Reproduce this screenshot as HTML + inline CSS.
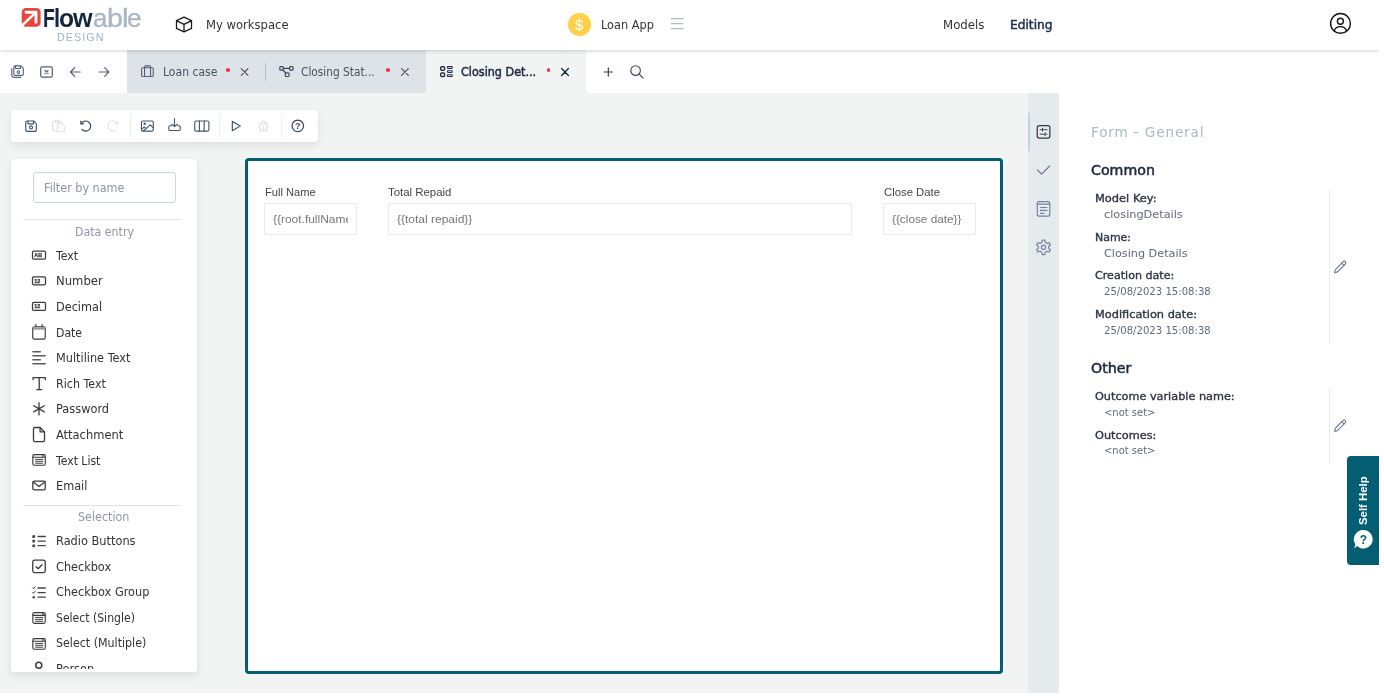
<!DOCTYPE html>
<html lang="en"><head><meta charset="utf-8"><title>Flowable Design - Closing Details</title>
<style>
*{box-sizing:border-box;margin:0;padding:0}
html,body{width:1384px;height:696px;overflow:hidden;background:#fff}
body{font-family:"Liberation Sans",sans-serif;color:#333;position:relative}
#app{position:absolute;left:0;top:0;width:1379px;height:693px;overflow:hidden;background:#f2f4f4;will-change:transform}
.d{font-family:"DejaVu Sans","Liberation Sans",sans-serif}
.t{position:absolute;white-space:nowrap;line-height:1;transform-origin:0 50%;display:block}
.abs,svg.i{position:absolute}
svg.i{overflow:visible;fill:none;stroke-linecap:round;stroke-linejoin:round}
header{position:absolute;left:0;top:0;width:1379px;height:50px;background:#fff;box-shadow:0 1px 4px rgba(0,0,0,.19);z-index:5}
nav.tabs{position:absolute;left:0;top:50px;width:1379px;height:43.2px;background:#f2f4f4}
.tabl{position:absolute;left:0;top:0;width:126.5px;height:43.2px;background:#fff}
.tabr{position:absolute;left:585.5px;top:0;width:793.5px;height:43.2px;background:#fff;border-bottom-left-radius:4px}
.tabgrp{position:absolute;left:126.5px;top:0;width:299px;height:43.2px;background:#dde3e6;border-bottom-right-radius:4px}
.tabsep{position:absolute;left:264.5px;top:13px;width:1px;height:18px;background:#b4c0c8}
.dot{position:absolute;width:3.6px;height:3.6px;border-radius:50%;background:#f5363f}
.toolbar{position:absolute;left:11px;top:109.6px;width:307px;height:32px;background:#fff;border-radius:4px;box-shadow:0 3px 8px rgba(0,0,0,.09)}
.toolbar i{position:absolute;top:4px;width:1px;height:24px;background:#eceff1}
.palette{position:absolute;left:11px;top:159px;width:186px;height:513px;background:#fff;border-radius:4px;box-shadow:0 4px 10px rgba(0,0,0,.09);overflow:hidden}
.filter{position:absolute;left:22px;top:13px;width:143px;height:31px;border:1px solid #c9d6db;border-radius:3px;background:#fff}
.hr{position:absolute;left:11.5px;width:158px;height:1px;background:#dfe4e8}
.canvas{position:absolute;left:245px;top:157.5px;width:757.5px;height:516.5px;border:3px solid #045d71;border-radius:4px;background:#fff}
.inp{position:absolute;top:202.5px;height:32px;border:1px solid #eaeaea;background:#fff;overflow:hidden}
.strip{position:absolute;left:1028px;top:93px;width:30.5px;height:600px;background:#e5eaed}
.strip b{position:absolute;left:.3px;top:20px;width:2.2px;height:38px;background:#c3d0e9}
.props{position:absolute;left:1058.5px;top:93px;width:320.5px;height:600px;background:#fff}
.vl{position:absolute;left:1329px;width:1px;background:#e8ebed}
.help{position:absolute;left:1347px;top:456px;width:32px;height:109px;background:#035e73;border-radius:4px 0 0 4px}
</style></head>
<body>
<div id="app">
<header>
<svg class="i" viewBox="0 0 170 50" style="left:0;top:0;width:170px;height:50px;"><rect x="21.7" y="7.9" width="18.9" height="18.9" rx="4.3" fill="#e8453c"/><path d="M26 12.3H36V22.3" stroke="#fff" stroke-width="2.9"/><path d="M35.6 12.7L19.5 27.8" stroke="#fff" stroke-width="2.5"/></svg>
<div class="brand"><span class="t" style="left:42.91px;top:5.8px;font-size:25px;font-weight:700;color:#14253d;transform:scaleX(0.773)">F</span><span class="t" style="left:54.07px;top:5.8px;font-size:25px;font-weight:700;color:#14253d;transform:scaleX(0.875)">l</span><span class="t" style="left:58.94px;top:5.8px;font-size:25px;font-weight:700;color:#14253d;transform:scaleX(0.984)">o</span><span class="t" style="left:73.47px;top:5.8px;font-size:25px;font-weight:700;color:#14253d;transform:scaleX(1.007)">w</span><span class="t" style="left:93.10px;top:5.8px;font-size:25px;-webkit-text-stroke:.3px;color:#a9b6c3;transform:scaleX(1.036)">a</span><span class="t" style="left:106.85px;top:5.8px;font-size:25px;-webkit-text-stroke:.3px;color:#a9b6c3;transform:scaleX(1.147)">b</span><span class="t" style="left:121.51px;top:5.8px;font-size:25px;-webkit-text-stroke:.3px;color:#a9b6c3;transform:scaleX(1.183)">l</span><span class="t" style="left:126.90px;top:5.8px;font-size:25px;-webkit-text-stroke:.3px;color:#a9b6c3;transform:scaleX(1.040)">e</span></div>
<span class="t" style="left:57.0px;top:32px;font-size:10.5px;color:#9db4bf;transform:scaleX(1.027);letter-spacing:1px;">DESIGN</span>
<svg class="i" viewBox="0 0 300 50" style="left:0;top:0;width:300px;height:50px;"><g transform="translate(184 24.5) scale(0.95) translate(-184 -24.5)"><path d="M184 16.8L191.9 20.4V28.6L184 32.3L176.1 28.6V20.4ZM176.1 20.4L184 24.3L191.9 20.4M184 24.3V32.3" stroke="#1a1a1a" stroke-width="1.35"/></g></svg>
<span class="t d" style="left:205.5px;top:20px;font-size:11.5px;transform:scaleX(1.007);">My workspace</span>
<div class="abs" style="left:568.2px;top:13.3px;width:22.6px;height:22.6px;border-radius:50%;background:#ffd04c"></div>
<span class="t" style="left:575.4px;top:17px;font-size:15px;color:#fff;transform:scaleX(0.983);">$</span>
<span class="t d" style="left:601.0px;top:20px;font-size:11.5px;transform:scaleX(0.987);">Loan App</span>
<svg class="i" viewBox="0 0 700 50" style="left:0;top:0;width:700px;height:50px;"><path d="M671.3 18.7H683M671.3 23.7H683M671.3 28.6H683" stroke="#a9bfc8" stroke-width="1.2"/></svg>
<span class="t d" style="left:942.6px;top:20px;font-size:11.5px;transform:scaleX(1.021);">Models</span>
<span class="t d" style="left:1010.4px;top:20px;font-size:11.5px;-webkit-text-stroke:.5px;color:#1e3250;transform:scaleX(1.061);">Editing</span>
<svg class="i" viewBox="0 0 1379 50" style="left:0;top:0;width:1379px;height:50px;"><circle cx="1340.5" cy="23.4" r="9.9" stroke="#111" stroke-width="1.4"/><circle cx="1340.4" cy="21.2" r="3" stroke="#111" stroke-width="1.4"/><path d="M1334.3 30.9C1335 28.2 1337.4 26.6 1340.4 26.6C1343.4 26.6 1345.8 28.2 1346.6 30.9" stroke="#111" stroke-width="1.4"/></svg>
</header>
<nav class="tabs">
<div class="tabl"></div><div class="tabgrp"></div><div class="tabr"></div><div class="tabsep"></div>
<svg class="i" viewBox="0 50 700 43" style="left:0;top:0;width:700px;height:43px;"><g stroke="#52627a" stroke-width="1.2"><g transform="translate(17.6 71.7) scale(0.92) translate(-17.6 -71.7)"><path d="M15 65.4H21.3L23.8 67.9V74.4A1.3 1.3 0 0 1 22.5 75.7H14.8A1.3 1.3 0 0 1 13.5 74.4V66.7A1.3 1.3 0 0 1 14.8 65.4Z"/><path d="M15.3 65.6V68.3H20.6V65.6"/><circle cx="18.5" cy="72.1" r="1.4"/><path d="M11.3 68.3V75.3A2.6 2.6 0 0 0 13.9 77.9H21"/></g><rect x="40.7" y="66.8" width="11.6" height="10.4" rx="1.6"/><path d="M45 70.5L48 73.5M48 70.5L45 73.5"/><path d="M70.6 72H80.2M74.7 67.7L70.5 72L74.7 76.3"/><path d="M99.1 72H108.7M104.6 67.7L108.8 72L104.6 76.3"/><g transform="translate(147.45 71.15) scale(0.92) translate(-147.45 -71.15)"><rect x="141.1" y="67.5" width="12.7" height="9.4" rx="1.4"/><path d="M144.3 76.8V66.6A1.2 1.2 0 0 1 145.5 65.4H149.6A1.2 1.2 0 0 1 150.8 66.6V76.8"/></g></g><g stroke="#3d4c63" stroke-width="1.2"><rect x="279.8" y="66.6" width="3.5" height="3.5" rx=".9"/><rect x="289.6" y="66.6" width="3.5" height="3.5" rx=".9"/><rect x="285.3" y="72.9" width="3.8" height="3.6" rx=".9"/><path d="M283.3 68.3H289.6M282.9 70L285.7 73"/></g><g stroke="#24324a" stroke-width="1.35"><rect x="440.7" y="66.7" width="3.9" height="3.5" rx=".9"/><rect x="440.7" y="73" width="3.9" height="3.5" rx=".9"/><g stroke-width="1.05"><rect x="447.3" y="66.55" width="5.1" height="1.8" rx=".9"/><rect x="447.3" y="70.65" width="5.1" height="1.8" rx=".9"/><rect x="447.3" y="74.75" width="5.1" height="1.8" rx=".9"/></g></g><path d="M241.2 68.6L248 75.4M248 68.6L241.2 75.4" stroke="#44546a" stroke-width="1.15"/><path d="M401.5 68.6L408.3 75.4M408.3 68.6L401.5 75.4" stroke="#44546a" stroke-width="1.15"/><path d="M561.6 68.6L568.4 75.4M568.4 68.6L561.6 75.4" stroke="#1e2d45" stroke-width="1.4"/><path d="M604.1 72H612.5M608.3 67.8V76.2" stroke="#333f50" stroke-width="1.15"/><circle cx="635.6" cy="70.6" r="4.8" stroke="#3d4b60" stroke-width="1.15"/><path d="M639.2 74.2L643 78" stroke="#3d4b60" stroke-width="1.15"/></svg>
<span class="t d" style="left:162.5px;top:17px;font-size:11.5px;color:#44546a;transform:scaleX(0.943);">Loan case</span>
<div class="dot" style="left:226.3px;top:18.3px"></div>
<span class="t d" style="left:301.4px;top:17px;font-size:11.5px;color:#44546a;transform:scaleX(0.921);">Closing Stat...</span>
<div class="dot" style="left:386.3px;top:18.3px"></div>
<span class="t d" style="left:461.3px;top:17px;font-size:11.5px;-webkit-text-stroke:.5px;color:#1e2d45;transform:scaleX(0.975);">Closing Det...</span>
<div class="dot" style="left:546.5px;top:18.3px"></div>
</nav>
<div class="toolbar"><i style="left:119px"></i><i style="left:208px"></i><i style="left:269.5px"></i>
<svg class="i" viewBox="11 109.6 307 32" style="left:0;top:0;width:307px;height:32px;"><g stroke="#44546a" stroke-width="1.25"><g transform="translate(31.05 125.75) scale(0.92) translate(-31.05 -125.75)"><path d="M26.8 120.1H33.9L36.8 123V130A1.4 1.4 0 0 1 35.4 131.4H26.7A1.4 1.4 0 0 1 25.3 130V121.5A1.4 1.4 0 0 1 26.7 120.1Z"/><path d="M27.7 120.3V123.2H33.7V120.3"/><circle cx="31" cy="127.1" r="1.6"/></g></g><g stroke="#dde1e5" stroke-width="1.15"><g transform="translate(58.5 125.6) scale(0.92) translate(-58.5 -125.6)"><path d="M54.6 120.7H53.4A1.2 1.2 0 0 0 52.2 121.9V129.5A1.2 1.2 0 0 0 53.4 130.7H57.3M59.3 120.7H60.5A1.2 1.2 0 0 1 61.7 121.9V122.6"/><rect x="54.9" y="119.4" width="4.2" height="2.5" rx=".8"/><path d="M58.7 123.2H62.3L64.8 125.7V130.7A1.2 1.2 0 0 1 63.6 131.9H58.7A1.2 1.2 0 0 1 57.5 130.7V124.4A1.2 1.2 0 0 1 58.7 123.2Z"/></g></g><g stroke="#3a495e" stroke-width="1.3"><g transform="translate(85.7 125.7) scale(0.92) translate(-85.7 -125.7)"><path d="M81.2 122.4A5.5 5.5 0 1 1 81.6 129.4"/><path d="M80.4 120.3V123.2H83.3"/></g></g><g stroke="#dde1e5" stroke-width="1.15"><g transform="translate(113 125.7) scale(0.92) translate(-113 -125.7)"><path d="M117.4 122.4A5.5 5.5 0 1 0 117 129.4"/><path d="M118.2 120.3V123.2H115.3"/></g></g><g stroke="#44546a" stroke-width="1.2"><g transform="translate(147.35 125.7) scale(0.92) translate(-147.35 -125.7)"><rect x="140.9" y="120.2" width="12.9" height="11" rx="1.6"/><circle cx="144.4" cy="123.2" r=".7" fill="#44546a"/><path d="M143 131L150.4 124.4L153.6 127.4M141.2 129.2L143.9 126.6L145.8 128.4"/></g><g transform="translate(174.5 124.1) scale(0.92) translate(-174.5 -124.1)"><path d="M174.5 117.6V126.4M171.6 123.6L174.5 126.5L177.4 123.6"/><path d="M171.4 125.5H169.6A1.3 1.3 0 0 0 168.3 126.8V129.3A1.3 1.3 0 0 0 169.6 130.6H179.5A1.3 1.3 0 0 0 180.8 129.3V126.8A1.3 1.3 0 0 0 179.5 125.5H177.7"/></g><g transform="translate(201.8 125.7) scale(0.92) translate(-201.8 -125.7)"><rect x="194.1" y="120.2" width="15.4" height="11" rx="1.6"/><path d="M199.2 120.2V131.2M204.4 120.2V131.2"/></g><g transform="translate(236.2 125.7) scale(0.92) translate(-236.2 -125.7)"><path d="M232 120.6L240.6 125.7L232 130.8Z" stroke-width="1.3"/></g></g><g stroke="#dde1e5" stroke-width="1.1"><g transform="translate(263.3 125.5) scale(0.92) translate(-263.3 -125.5)"><path d="M260.9 122.6A2.4 2.4 0 0 1 265.7 122.6"/><path d="M259.6 126.4A3.7 3.7 0 0 1 267 126.4V127.6A3.7 3.7 0 0 1 259.6 127.6ZM263.3 125.4V131"/><path d="M259.6 126.6H257.5M267 126.6H269.2M260 124L258.3 122.3M266.6 124L268.3 122.3M260.2 129.8L258.4 131.6M266.4 129.8L268.2 131.6"/></g></g><circle cx="297.8" cy="125.4" r="5.8" stroke="#3a495e" stroke-width="1.25"/><text x="297.8" y="128.6" font-family="Liberation Sans, sans-serif" font-size="9" font-weight="700" fill="#3a495e" stroke="none" text-anchor="middle">?</text></svg>
</div>
<aside class="palette">
<div class="filter"></div>
<span class="t d" style="left:32.7px;top:24px;font-size:11.5px;color:#8a94a6;transform:scaleX(0.974);">Filter by name</span>
<div class="hr" style="top:60px"></div>
<span class="t d" style="left:63.8px;top:68px;font-size:11.5px;color:#8d97ad;transform:scaleX(0.959);">Data entry</span>
<span class="t d" style="left:44.9px;top:92px;font-size:11.5px;transform:scaleX(0.950);">Text</span>
<span class="t d" style="left:44.9px;top:117px;font-size:11.5px;transform:scaleX(1.011);">Number</span>
<span class="t d" style="left:44.9px;top:143px;font-size:11.5px;transform:scaleX(0.983);">Decimal</span>
<span class="t d" style="left:44.9px;top:169px;font-size:11.5px;transform:scaleX(0.949);">Date</span>
<span class="t d" style="left:44.9px;top:194px;font-size:11.5px;transform:scaleX(0.983);">Multiline Text</span>
<span class="t d" style="left:44.9px;top:220px;font-size:11.5px;transform:scaleX(0.965);">Rich Text</span>
<span class="t d" style="left:44.9px;top:245px;font-size:11.5px;transform:scaleX(0.988);">Password</span>
<span class="t d" style="left:44.9px;top:271px;font-size:11.5px;">Attachment</span>
<span class="t d" style="left:44.9px;top:297px;font-size:11.5px;transform:scaleX(0.942);">Text List</span>
<span class="t d" style="left:44.9px;top:322px;font-size:11.5px;transform:scaleX(0.984);">Email</span>
<div class="hr" style="top:346px"></div>
<span class="t d" style="left:67.0px;top:353px;font-size:11.5px;color:#8d97ad;transform:scaleX(0.970);">Selection</span>
<span class="t d" style="left:44.9px;top:377px;font-size:11.5px;transform:scaleX(0.988);">Radio Buttons</span>
<span class="t d" style="left:44.9px;top:403px;font-size:11.5px;transform:scaleX(0.981);">Checkbox</span>
<span class="t d" style="left:44.9px;top:428px;font-size:11.5px;transform:scaleX(0.985);">Checkbox Group</span>
<span class="t d" style="left:44.9px;top:454px;font-size:11.5px;transform:scaleX(0.945);">Select (Single)</span>
<span class="t d" style="left:44.9px;top:479px;font-size:11.5px;transform:scaleX(0.963);">Select (Multiple)</span>
<span class="t d" style="left:44.9px;top:505px;font-size:11.5px;transform:scaleX(0.988);">Person</span>
<svg class="i" viewBox="11 159 186 513" style="left:0;top:0;width:186px;height:513px;"><g stroke="#3a3a3a" stroke-width="1.25" transform="translate(0 0)"><rect x="32.5" y="251.2" width="13" height="8" rx="1.2"/><text x="34.3" y="257.2" font-family="Liberation Sans, sans-serif" font-size="5.4" font-weight="700" fill="#333" stroke="#333" stroke-width=".25">AB</text><rect x="32.5" y="276.8" width="13" height="8" rx="1.2"/><text x="34.3" y="282.8" font-family="Liberation Sans, sans-serif" font-size="5.4" font-weight="700" fill="#333" stroke="#333" stroke-width=".25">12</text><rect x="32.5" y="302.4" width="13" height="8" rx="1.2"/><text x="34.3" y="308.4" font-family="Liberation Sans, sans-serif" font-size="5.4" font-weight="700" fill="#333" stroke="#333" stroke-width=".25">12</text><g transform="translate(39.05 331.8) scale(0.92) translate(-39.05 -331.8)"><rect x="32.2" y="326.3" width="13.6" height="13.5" rx="1.8"/><path d="M35.6 323.8V326.3M42.4 323.8V326.3"/><path d="M32.6 328.2H45.4" stroke="#9a9a9a" stroke-width="2.6" stroke-linecap="butt"/></g><path d="M32.9 351.8H40.3M32.9 355.8H45.2M32.9 359.8H40.3M32.9 363.8H45.2" stroke="#5a5a5a" stroke-width="1.5"/><g transform="translate(39.2 383.7) scale(0.92) translate(-39.2 -383.7)"><path d="M32.5 379.3V377.2H45.9V379.3M39.2 377.2V390.2M36.6 390.2H41.8" stroke-width="1.4"/></g><g transform="translate(39 408.85) scale(0.92) translate(-39 -408.85)"><path d="M39 402.2V415.5M33.2 405.5L44.8 412.2M44.8 405.5L33.2 412.2" stroke-width="1.4"/></g><g transform="translate(39 434.6) scale(0.92) translate(-39 -434.6)"><path d="M34.5 426.9H40.2L45 431.7V440.8A1.5 1.5 0 0 1 43.5 442.3H34.5A1.5 1.5 0 0 1 33 440.8V428.4A1.5 1.5 0 0 1 34.5 426.9Z" stroke-width="1.4"/><path d="M40.2 427.2V431.7H44.8" stroke-width="1.4"/></g><g transform="translate(39.05 459.9) scale(0.92) translate(-39.05 -459.9)"><rect x="32.3" y="454.1" width="13.5" height="11.6" rx="1.6"/><path d="M32.3 457H45.8M43.3 454.9V456.3" /><path d="M35.2 459.3H43M35.2 461.4H43M35.2 463.5H43" stroke-width="1.05"/></g><g transform="translate(39.05 485.5) scale(0.92) translate(-39.05 -485.5)"><rect x="32.3" y="480.8" width="13.5" height="9.4" rx="1.5" stroke-width="1.4"/><path d="M32.8 481.8L39 486.6L45.3 481.8" stroke-width="1.4"/></g><g stroke="#444" stroke-width="1.3"><path d="M38 536.5H45.3M38 541.1H45.3M38 545.7H45.3"/><circle cx="33.7" cy="536.5" r=".9" fill="#444"/><circle cx="33.7" cy="541.1" r=".9"/><circle cx="33.7" cy="545.7" r=".9"/></g><g transform="translate(39 566.4) scale(0.92) translate(-39 -566.4)"><rect x="32.2" y="559.6" width="13.6" height="13.6" rx="2" stroke-width="1.4"/><path d="M35.9 566.8L38.1 569L42.3 564.6" stroke-width="1.4"/></g><g stroke="#444" stroke-width="1.3"><path d="M38 588H45.3M38 592.6H45.3M38 597.2H45.3"/><path d="M32.6 587.8L33.5 588.8L35.2 586.7M32.6 592.4L33.5 593.4L35.2 591.3" stroke-width="1"/><circle cx="33.7" cy="597.2" r=".6" fill="#444"/></g><g transform="translate(39.05 618) scale(0.92) translate(-39.05 -618)"><rect x="32.3" y="612.2" width="13.5" height="11.6" rx="1.6"/><path d="M32.3 615.1H45.8M43.3 613V614.4" /><path d="M35.2 617.4H43M35.2 619.5H43M35.2 621.6H43" stroke-width="1.05"/></g><g transform="translate(39.05 643.9) scale(0.92) translate(-39.05 -643.9)"><rect x="32.3" y="638.1" width="13.5" height="11.6" rx="1.6"/><path d="M32.3 641H45.8M43.3 638.9V640.3" /><path d="M35.2 643.3H43M35.2 645.4H43M35.2 647.5H43" stroke-width="1.05"/></g><circle cx="38.8" cy="665.3" r="3" stroke-width="1.5"/></g></svg>
<div class="abs" style="left:0;top:510px;width:186px;height:3px;background:#fff"></div>
</aside>
<main>
<div class="canvas"></div>
<label class="t" style="left:264.5px;top:187px;font-size:11px;color:#444;transform:scaleX(1.011);">Full Name</label>
<label class="t" style="left:388.1px;top:187px;font-size:11px;color:#444;transform:scaleX(1.037);">Total Repaid</label>
<label class="t" style="left:883.5px;top:187px;font-size:11px;color:#444;transform:scaleX(1.029);">Close Date</label>
<div class="inp" style="left:264.4px;width:92.6px"></div>
<div class="inp" style="left:388px;width:463.6px"></div>
<div class="inp" style="left:883px;width:92.6px"></div>
<div class="abs" style="left:273px;top:204px;width:74.9px;height:29px;overflow:hidden"><span class="t" style="left:0.0px;top:10px;font-size:11.5px;color:#777;transform:scaleX(1.039);">{{root.fullName}}</span></div>
<span class="t" style="left:397.2px;top:214px;font-size:11.5px;color:#777;transform:scaleX(1.043);">{{total repaid}}</span>
<span class="t" style="left:892.1px;top:214px;font-size:11.5px;color:#777;transform:scaleX(1.025);">{{close date}}</span>
</main>
<div class="strip"><b></b>
<svg class="i" viewBox="1028 93 30.5 600" style="left:0;top:0;width:30.5px;height:600px;"><g transform="translate(1043.55 131.8) scale(0.92) translate(-1043.55 -131.8)"><rect x="1036.7" y="125" width="13.7" height="13.6" rx="2.1" stroke="#2d3a4f" stroke-width="1.35"/><path d="M1039.8 129.5H1041.2M1043.6 129.5H1047.3M1039.8 134.4H1044M1046.4 134.4H1047.3" stroke="#2d3a4f" stroke-width="1"/><path d="M1042.4 128.3V130.7M1045.2 133.2V135.6" stroke="#2d3a4f" stroke-width="1.3"/></g><path d="M1037.4 169.9L1041.6 174.1L1049.8 165.9" stroke="#64748f" stroke-width="1.2"/><g stroke="#7383a0" stroke-width="1.2"><rect x="1037.3" y="201.6" width="12.5" height="14.5" rx="1.9"/><path d="M1037.3 204.2H1049.8"/><path d="M1040.5 207.5H1046.9M1040.5 210.4H1046.9M1040.5 213.3H1043.8"/><path d="M1041.86 242.26L1042.20 240.07L1044.80 240.07L1045.14 242.26L1047.05 243.36L1049.11 242.56L1050.42 244.81L1048.68 246.20L1048.68 248.40L1050.42 249.79L1049.11 252.04L1047.05 251.24L1045.14 252.34L1044.80 254.53L1042.20 254.53L1041.86 252.34L1039.95 251.24L1037.89 252.04L1036.58 249.79L1038.32 248.40L1038.32 246.20L1036.58 244.81L1037.89 242.56L1039.95 243.36Z" stroke-linejoin="round"/><circle cx="1043.5" cy="247.3" r="2.1"/></g></svg>
</div>
<aside class="props"></aside>
<span class="t d" style="left:1091.4px;top:126px;font-size:13.2px;color:#a7bbc0;transform:scaleX(1.035);letter-spacing:.8px;">Form - General</span>
<span class="t d" style="left:1091.4px;top:164px;font-size:13.2px;-webkit-text-stroke:.5px;color:#1e2a3e;transform:scaleX(1.076);">Common</span>
<span class="t d" style="left:1095.3px;top:194px;font-size:10.7px;-webkit-text-stroke:.35px;color:#2c3645;transform:scaleX(1.068);">Model Key:</span><span class="t d" style="left:1104.4px;top:210px;font-size:10.7px;color:#5d6b7c;transform:scaleX(1.056);">closingDetails</span>
<span class="t d" style="left:1095.3px;top:233px;font-size:10.7px;-webkit-text-stroke:.35px;color:#2c3645;transform:scaleX(1.024);">Name:</span><span class="t d" style="left:1104.4px;top:249px;font-size:10.7px;color:#5d6b7c;transform:scaleX(1.050);">Closing Details</span>
<span class="t d" style="left:1095.3px;top:271px;font-size:10.7px;-webkit-text-stroke:.35px;color:#2c3645;transform:scaleX(1.039);">Creation date:</span><span class="t d" style="left:1104.4px;top:287px;font-size:10.7px;color:#5d6b7c;transform:scaleX(0.945);">25/08/2023 15:08:38</span>
<span class="t d" style="left:1095.3px;top:310px;font-size:10.7px;-webkit-text-stroke:.35px;color:#2c3645;transform:scaleX(1.060);">Modification date:</span><span class="t d" style="left:1104.4px;top:326px;font-size:10.7px;color:#5d6b7c;transform:scaleX(0.945);">25/08/2023 15:08:38</span>
<div class="vl" style="top:190px;height:153.5px"></div>
<span class="t d" style="left:1091.0px;top:362px;font-size:13.2px;-webkit-text-stroke:.5px;color:#1e2a3e;transform:scaleX(1.076);">Other</span>
<span class="t d" style="left:1095.3px;top:392px;font-size:10.7px;-webkit-text-stroke:.35px;color:#2c3645;transform:scaleX(1.053);">Outcome variable name:</span><span class="t d" style="left:1104.4px;top:408px;font-size:10.7px;color:#5d6b7c;transform:scaleX(0.932);">&lt;not set&gt;</span>
<span class="t d" style="left:1095.3px;top:431px;font-size:10.7px;-webkit-text-stroke:.35px;color:#2c3645;transform:scaleX(1.059);">Outcomes:</span><span class="t d" style="left:1104.4px;top:446px;font-size:10.7px;color:#5d6b7c;transform:scaleX(0.932);">&lt;not set&gt;</span>
<div class="vl" style="top:387.5px;height:76.5px"></div>
<svg class="i" viewBox="0 0 1379 693" style="left:0;top:0;width:1379px;height:693px;pointer-events:none"><g transform="translate(1334.3 273.1) rotate(-46)" stroke="#6b7a94" stroke-width="1.1"><path d="M0.8 -0.45L3.6 -1.6H14.2A1.6 1.6 0 0 1 14.2 1.6H3.6L0.8 0.45Z"/><path d="M12.4 -1.6V1.6"/></g><g transform="translate(1334.3 431.7) rotate(-46)" stroke="#6b7a94" stroke-width="1.1"><path d="M0.8 -0.45L3.6 -1.6H14.2A1.6 1.6 0 0 1 14.2 1.6H3.6L0.8 0.45Z"/><path d="M12.4 -1.6V1.6"/></g></svg>
<div class="help">
<svg class="i" viewBox="1347 456 32 109" style="left:0;top:0;width:32px;height:109px;"><path d="M1363.3 530A9.3 9.3 0 1 1 1357 546.1L1354.3 548.6L1355.3 544.2A9.3 9.3 0 0 1 1363.3 530Z" fill="#fff" stroke="none"/><text x="1363.4" y="543.6" font-family="Liberation Sans, sans-serif" font-size="12" font-weight="700" fill="#035e73" stroke="none" text-anchor="middle">?</text></svg>
<span class="t" style="left:8.6px;top:68.6px;font-size:11.4px;font-weight:700;color:#fff;transform:rotate(-90deg);transform-origin:0 0;line-height:14px">Self Help</span>
</div>
</div>
</body></html>
